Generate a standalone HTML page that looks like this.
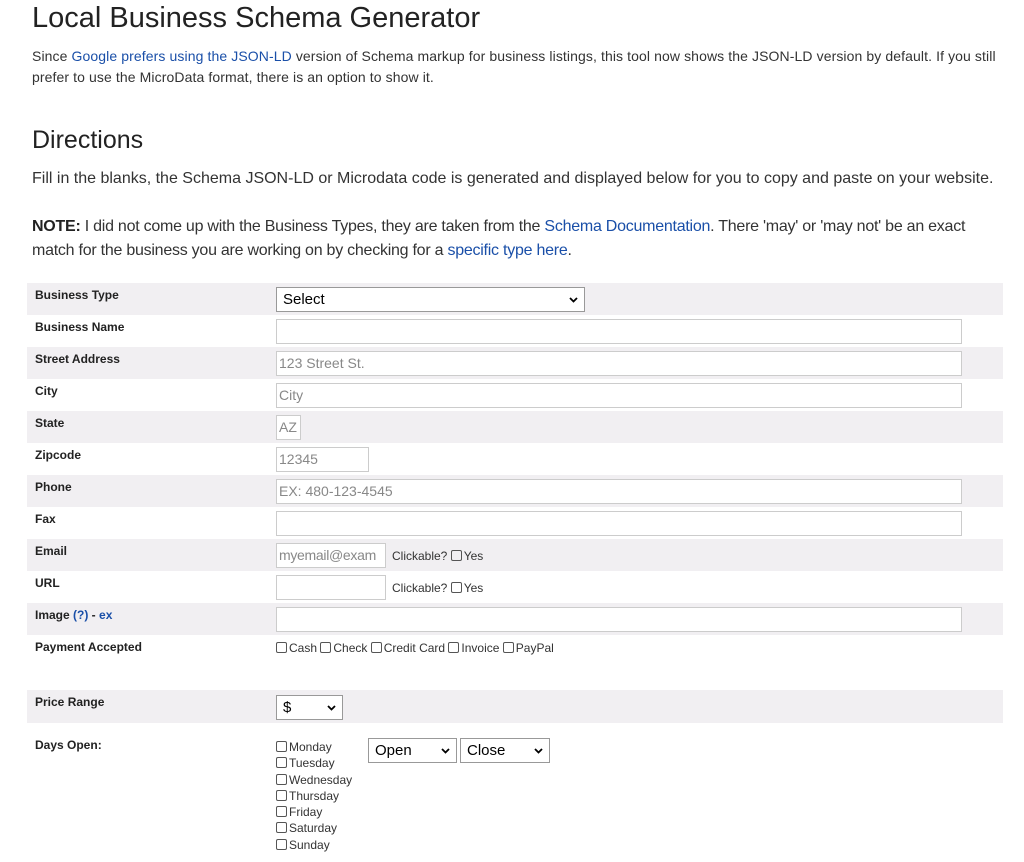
<!DOCTYPE html>
<html><head><meta charset="utf-8"><style>
*{box-sizing:border-box;margin:0;padding:0}
body{width:1024px;height:862px;background:#fff;position:relative;overflow:hidden;font-family:"Liberation Sans",Arial,sans-serif;color:#222}
.a{position:absolute;white-space:nowrap}
.n{color:#333}
a{color:#1a4fa8;text-decoration:none}
.row{position:absolute;left:27px;width:976px;height:32px}
.g{background:#f1eff2}
.lb{position:absolute;left:35px;font-size:12px;font-weight:bold;color:#222}
.in{position:absolute;left:276px;height:25px;border:1px solid #ccc;background:#fff;font-size:14px;color:#888;padding:3px 2px;line-height:17px;overflow:hidden;white-space:nowrap}
.sel{position:absolute;height:25px;border:1px solid #999;background:#fff;font-size:15px;color:#000;padding:3px 6px;line-height:17px}
.sel svg{position:absolute;right:6px;top:9px}
.cb{display:inline-block;width:11px;height:11px;border:1px solid #555;border-radius:2px;vertical-align:-1px;margin-right:2px}
.s{font-size:12px;color:#333}
</style></head><body>
<div class="a" style="left:32px;top:2px;font-size:29px;color:#222">Local Business Schema Generator</div>
<div class="a n" style="left:32px;top:46px;font-size:14px;line-height:21px;letter-spacing:0.1px">Since <a>Google prefers using the JSON-LD</a> version of Schema markup for business listings, this tool now shows the JSON-LD version by default. If you still<br>prefer to use the MicroData format, there is an option to show it.</div>
<div class="a" style="left:32px;top:126px;font-size:25px;color:#222">Directions</div>
<div class="a n" style="left:32px;top:170px;font-size:16px">Fill in the blanks, the Schema JSON-LD or Microdata code is generated and displayed below for you to copy and paste on your website.</div>
<div class="a n" style="left:32px;top:215px;font-size:16px;line-height:24px;letter-spacing:-0.25px"><b style="color:#222">NOTE:</b> I did not come up with the Business Types, they are taken from the <a>Schema Documentation</a>. There 'may' or 'may not' be an exact<br>match for the business you are working on by checking for a <a>specific type here</a>.</div>

<div class="row g" style="top:283px"></div>
<div class="row g" style="top:347px"></div>
<div class="row g" style="top:411px"></div>
<div class="row g" style="top:475px"></div>
<div class="row g" style="top:539px"></div>
<div class="row g" style="top:603px"></div>
<div class="row g" style="top:690px;height:33px"></div>

<div class="lb" style="top:288px">Business Type</div>
<div class="lb" style="top:320px">Business Name</div>
<div class="lb" style="top:352px">Street Address</div>
<div class="lb" style="top:384px">City</div>
<div class="lb" style="top:416px">State</div>
<div class="lb" style="top:448px">Zipcode</div>
<div class="lb" style="top:480px">Phone</div>
<div class="lb" style="top:512px">Fax</div>
<div class="lb" style="top:544px">Email</div>
<div class="lb" style="top:576px">URL</div>
<div class="lb" style="top:608px">Image <a>(?)</a> - <a>ex</a></div>
<div class="lb" style="top:640px">Payment Accepted</div>
<div class="lb" style="top:695px">Price Range</div>
<div class="lb" style="top:738px">Days Open:</div>

<div class="sel" style="left:276px;top:287px;width:309px">Select<svg width="9" height="6" viewBox="0 0 9 6"><path d="M1 1l3.5 3.5L8 1" stroke="#000" stroke-width="1.8" fill="none"/></svg></div>
<div class="in" style="top:319px;width:686px"></div>
<div class="in" style="top:351px;width:686px">123 Street St.</div>
<div class="in" style="top:383px;width:686px">City</div>
<div class="in" style="top:415px;width:25px">AZ</div>
<div class="in" style="top:447px;width:93px">12345</div>
<div class="in" style="top:479px;width:686px">EX: 480-123-4545</div>
<div class="in" style="top:511px;width:686px"></div>
<div class="in" style="top:543px;width:110px;letter-spacing:-0.3px">myemail@exam</div>
<div class="a s" style="left:392px;top:549px"><span>Clickable?</span> <span class="cb"></span>Yes</div>
<div class="in" style="top:575px;width:110px"></div>
<div class="a s" style="left:392px;top:581px"><span>Clickable?</span> <span class="cb"></span>Yes</div>
<div class="in" style="top:607px;width:686px"></div>
<div class="a s" style="left:276px;top:641px"><span class="cb"></span>Cash <span class="cb"></span>Check <span class="cb"></span>Credit Card <span class="cb"></span>Invoice <span class="cb"></span>PayPal</div>
<div class="sel" style="left:276px;top:695px;width:67px">$<svg width="9" height="6" viewBox="0 0 9 6"><path d="M1 1l3.5 3.5L8 1" stroke="#000" stroke-width="1.8" fill="none"/></svg></div>
<div class="a s" style="left:276px;top:739px;line-height:16.3px">
<span class="cb"></span>Monday<br><span class="cb"></span>Tuesday<br><span class="cb"></span>Wednesday<br><span class="cb"></span>Thursday<br><span class="cb"></span>Friday<br><span class="cb"></span>Saturday<br><span class="cb"></span>Sunday</div>
<div class="sel" style="left:368px;top:738px;width:89px">Open<svg width="9" height="6" viewBox="0 0 9 6"><path d="M1 1l3.5 3.5L8 1" stroke="#000" stroke-width="1.8" fill="none"/></svg></div>
<div class="sel" style="left:460px;top:738px;width:90px">Close<svg width="9" height="6" viewBox="0 0 9 6"><path d="M1 1l3.5 3.5L8 1" stroke="#000" stroke-width="1.8" fill="none"/></svg></div>
</body></html>
